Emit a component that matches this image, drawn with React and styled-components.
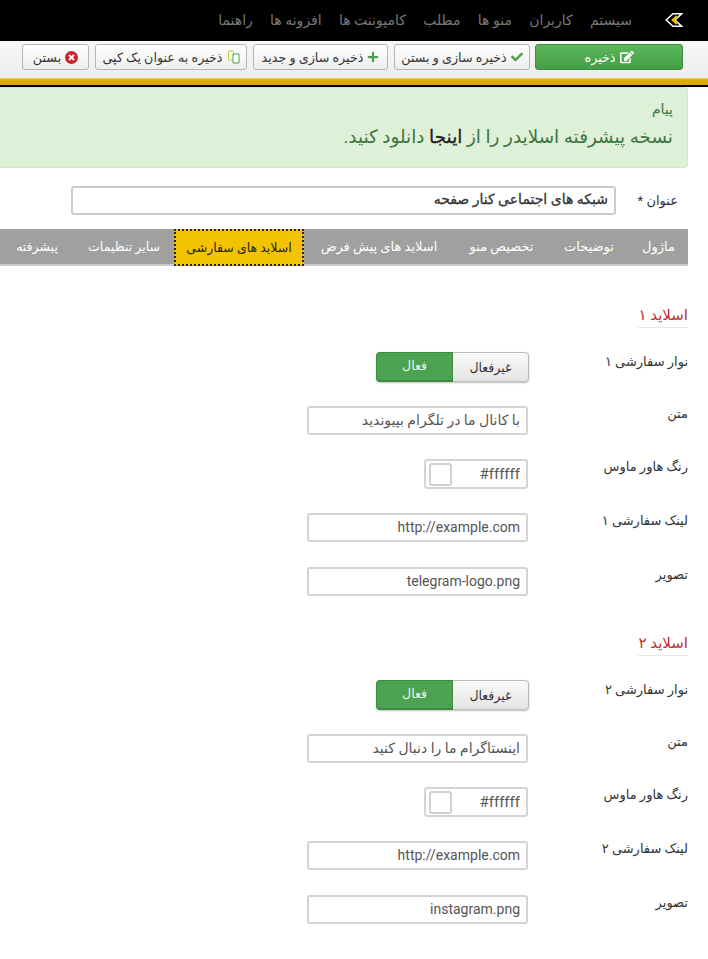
import React from "react";
import styled, { createGlobalStyle } from "styled-components";
import { FaCheck, FaPlus, FaEdit } from "react-icons/fa";

const Global = createGlobalStyle`
  html, body { margin: 0; padding: 0; background: #fff; }
  body { font-family: Roboto, "DejaVu Sans", sans-serif; font-size: 13px; color: #333; direction: rtl; }
  * { box-sizing: border-box; }
`;

const Page = styled.div`width: 708px; height: 959px; overflow: hidden;`;
const NavBar = styled.header`height: 41px; background: #000; display: flex; align-items: center; padding: 0 25px 2px 0;`;
const Logo = styled.svg`width: 18px; height: 14px; margin-left: 33px; flex: none;`;
const NavMenu = styled.nav`display: flex; gap: 17.3px;`;
const NavItem = styled.span`color: #777; font-size: 14px; white-space: nowrap;`;
const Toolbar = styled.div`
  height: 37px; padding: 3px 25px 0 0; display: flex;
  background: linear-gradient(#f7f7f7, #eee);
`;
const ToolButton = styled.button`
  height: 26px; width: ${p => p.$w}px; flex: none; padding: 0; margin-left: ${p => p.$primary ? 5 : 6}px;
  display: flex; align-items: center; justify-content: center; gap: 4px;
  direction: rtl; font: 12.7px Roboto, "DejaVu Sans", sans-serif; color: ${p => p.$primary ? "#fff" : "#333"};
  border: 1px solid ${p => p.$primary ? "#3e8b42" : "#b5b5b5"}; border-radius: 3px;
  background: ${p => p.$primary ? "linear-gradient(#5cb85c,#449d44)" : "linear-gradient(#fff,#eee)"};
`;
const GoldBar = styled.div`
  height: 9px; background: linear-gradient(#f0d67a, #e0ab0a 25%, #d9a509);
  border-bottom: 2px solid #000;
`;
const Main = styled.main`width: 688px; margin-right: 20px;`;
const Alert = styled.div`
  height: 81px; background: #dff0d8; border: 1px solid #d6e9c6; border-left: none;
  border-top-right-radius: 4px; border-bottom-right-radius: 4px;
  padding: 11px 14px 0; color: #3c763d;
`;
const AlertTitle = styled.div`font-size: 14px; line-height: 20px;`;
const AlertBody = styled.div`
  font-size: 18.4px; line-height: 26px; margin-top: 5px; white-space: nowrap;
  a { color: #222; font-weight: 400; text-decoration: none; -webkit-text-stroke: 0.3px #222; }
`;
const TitleRow = styled.div`display: flex; align-items: center; height: 29px; margin-top: 18px; padding-right: 10px;`;
const TitleLabel = styled.label`width: 62px; flex: none; font-size: 13px;`;
const TitleInput = styled.div`
  width: 545px; height: 29px; border: 2px solid #ccc; border-radius: 3px; background: #fff;
  padding: 0 6px; line-height: 23px; font-size: 14px; color: #333; -webkit-text-stroke: 0.3px #333;
`;
const Tabs = styled.div`
  display: flex; height: 37px; margin-top: 14px; background: #a0a0a0; border-bottom: 2px solid #ccc;
`;
const Tab = styled.div`
  width: ${p => p.$w}px; height: ${p => p.$active ? 37 : 35}px; display: flex; align-items: center; justify-content: center;
  white-space: nowrap; font-size: 13px; color: ${p => p.$active ? "#222" : "#fff"};
  background: ${p => p.$active ? "#f4c300" : "transparent"};
  outline: ${p => p.$active ? "2px dotted #222" : "none"}; outline-offset: -2px;
  &:nth-child(n + 5) { font-size: 12.5px; }
`;
const Section = styled.section`margin-top: ${p => p.$first ? 38 : 36}px;`;
const SectionTitle = styled.h3`
  display: inline-block; margin: 0; font-size: 15px; font-weight: 400; color: #bd2c2c; line-height: 22px;
  border-bottom: 1px solid #e8e8e8; padding-bottom: 1px;
`;
const Field = styled.div`display: flex; margin-top: ${p => p.$mt || 24}px;`;
const FieldLabel = styled.div`width: 160px; flex: none; font-size: 13px; line-height: 16px; color: #333; padding-top: ${p => p.$pt || 0}px;`;
const Toggle = styled.div`display: flex; width: 153px; height: 30px; margin-right: -1px; border-radius: 4px; box-shadow: 0 1px 2px rgba(0,0,0,.25);`;
const ToggleOff = styled.div`
  width: 76px; display: flex; align-items: center; justify-content: center; font-size: 12.5px; color: #333;
  background: linear-gradient(#fafafa, #e4e4e4); border: 1px solid #bbb; border-left: none; border-radius: 0 4px 4px 0;
`;
const ToggleOn = styled.div`
  width: 77px; display: flex; align-items: center; justify-content: center; padding-bottom: 3px; font-size: 12.5px; color: #e8f5e8;
  background: #4ba24f; border: 1px solid #3e8b42; border-bottom-width: 2px; border-radius: 4px 0 0 4px;
`;
const TextInput = styled.div`
  width: 221px; height: 29px; border: 2px solid #d4d4d4; border-radius: 3px; background: #fff;
  padding: 0 6px; line-height: 25px; font-size: 14px; color: #555; direction: ${p => p.$ltr ? "ltr" : "rtl"}; text-align: right;
`;
const ColorInput = styled.div`
  position: relative; width: 104px; height: 30px; border: 2px solid #d4d4d4; border-radius: 3px; background: #fff;
  padding: 0 6px; line-height: 26px; font-size: 15px; color: #555; direction: ltr; text-align: right;
`;
const Swatch = styled.span`
  position: absolute; left: 3px; top: 2px; width: 23px; height: 23px; background: #fff;
  border: 2px solid #d0d0d0; border-radius: 3px;
`;

const tools = [
  { w: 148, t: "ذخیره", primary: true, icon: <FaEdit size={14} color="#fff" /> },
  { w: 136, t: "ذخیره سازی و بستن", icon: <FaCheck size={12} color="#4a9e4d" /> },
  { w: 135, t: "ذخیره سازی و جدید", icon: <FaPlus size={12} color="#4a9e4d" /> },
  { w: 152, t: "ذخیره به عنوان یک کپی", icon: <svg width="13" height="14" viewBox="0 0 13 14"><path d="M1.500 1h5v9h-5z" fill="#fff" stroke="#b7cf3a"/><path d="M6 4h6v9H6z" fill="#fff" stroke="#4a9e4d"/></svg> },
  { w: 67, t: "بستن", icon: <svg width="13" height="13" viewBox="0 0 13 13"><circle cx="6.500" cy="6.500" r="6.500" fill="#c8242b"/><path d="M4 4l5 5M9 4l-5 5" stroke="#fff" strokeWidth="1.8"/></svg> },
];
const nav = ["سیستم","کاربران","منو ها","مطلب","کامپوننت ها","افزونه ها","راهنما"];
const tabs = [
  ["ماژول", 59], ["توضیحات", 80], ["تخصیص منو", 95], ["اسلاید های پیش فرض", 150],
  ["اسلاید های سفارشی", 130], ["سایر تنظیمات", 100], ["پیشرفته", 74],
];
const slides = [
  { n: "۱", text: "با کانال ما در تلگرام بپیوندید", img: "telegram-logo.png" },
  { n: "۲", text: "اینستاگرام ما را دنبال کنید", img: "instagram.png" },
];

export default function App() {
  return (
    <Page>
      <Global />
      <NavBar>
        <Logo viewBox="0 0 18 14">
          <path d="M8 .8h8.500L10 7l6.500 6.200H8L1.200 7z" fill="#000" stroke="#fff" strokeWidth="1.500"/>
          <path d="M12 3.200L8 7l4 3.800" fill="none" stroke="#e8b90c" strokeWidth="2.600"/>
        </Logo>
        <NavMenu>{nav.map(n => <NavItem key={n}>{n}</NavItem>)}</NavMenu>
      </NavBar>
      <Toolbar>
        {tools.map(b => <ToolButton key={b.t} $w={b.w} $primary={b.primary}>{b.icon}<span>{b.t}</span></ToolButton>)}
      </Toolbar>
      <GoldBar />
      <Main>
        <Alert>
          <AlertTitle>پیام</AlertTitle>
          <AlertBody>نسخه پیشرفته اسلایدر را از <a>اینجا</a> دانلود کنید.</AlertBody>
        </Alert>
        <TitleRow>
          <TitleLabel>عنوان *</TitleLabel>
          <TitleInput>شبکه های اجتماعی کنار صفحه</TitleInput>
        </TitleRow>
        <Tabs>{tabs.map(([t, w], i) => <Tab key={t} $w={w} $active={i === 4}>{t}</Tab>)}</Tabs>
        {slides.map((s, i) => (
          <Section key={s.n} $first={i === 0}>
            <SectionTitle>اسلاید {s.n}</SectionTitle>
            <Field>
              <FieldLabel $pt={2}>نوار سفارشی {s.n}</FieldLabel>
              <Toggle><ToggleOff>غیرفعال</ToggleOff><ToggleOn>فعال</ToggleOn></Toggle>
            </Field>
            <Field><FieldLabel>متن</FieldLabel><TextInput>{s.text}</TextInput></Field>
            <Field><FieldLabel>رنگ هاور ماوس</FieldLabel><ColorInput><Swatch />#ffffff</ColorInput></Field>
            <Field><FieldLabel>لینک سفارشی {s.n}</FieldLabel><TextInput $ltr>http://example.com</TextInput></Field>
            <Field $mt={25}><FieldLabel>تصویر</FieldLabel><TextInput $ltr>{s.img}</TextInput></Field>
          </Section>
        ))}
      </Main>
    </Page>
  );
}
